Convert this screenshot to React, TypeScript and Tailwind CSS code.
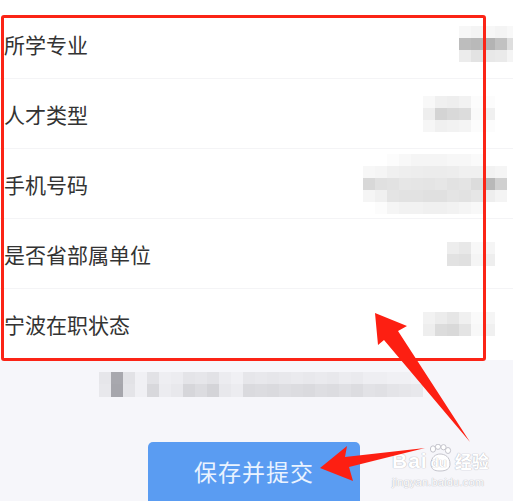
import React from "react";

type Cells = string[][];

const rows: { label: string; mr: string; cells: Cells }[] = [
  {
    label: "所学专业",
    mr: "mr-[-6px]",
    cells: [
      ["#f7f7f7", "#f4f4f4", "#f7f7f7", "#f4f4f4", "#f8f8f8"],
      ["#bdbdbd", "#b9b9b9", "#b3b3b3", "#c1c1c1", "#dedede"],
      ["#ececec", "#e3e3e3", "#e8e8e8", "#eaeaea", "#f4f4f4"],
    ],
  },
  {
    label: "人才类型",
    mr: "mr-[18px]",
    cells: [
      ["#f8f8f8", "#f0f0f0", "#eeeeee", "#f2f2f2", "#fcfcfc", "#fcfcfc"],
      ["#eeeeee", "#d4d4d4", "#d9d9d9", "#dcdcdc", "#fafafa", "#f0f0f0"],
      ["#f6f6f6", "#f0f0f0", "#f2f2f2", "#f4f4f4", "#fcfcfc", "#fcfcfc"],
    ],
  },
  {
    label: "手机号码",
    mr: "mr-[6px]",
    cells: [
      ["#ffffff", "#ffffff", "#fcfcfc", "#f8f8f8", "#f5f5f5", "#f5f5f5", "#f5f5f5", "#f7f7f7", "#f7f7f7", "#fafafa", "#ffffff", "#ffffff"],
      ["#f7f7f7", "#f5f5f5", "#f0f0f0", "#eeeeee", "#ededed", "#ececec", "#ececec", "#ededed", "#f0f0f0", "#f0f0f0", "#f2f2f2", "#f5f5f5"],
      ["#d8d8d8", "#e0e0e0", "#e2e2e2", "#e6e6e6", "#e5e5e5", "#e4e4e4", "#e6e6e6", "#e2e2e2", "#e4e4e4", "#dcdcdc", "#b8b8b8", "#d0d0d0"],
      ["#f5f5f5", "#f0f0f0", "#e4e4e4", "#e2e2e2", "#e2e2e2", "#e0e0e0", "#e0e0e0", "#e4e4e4", "#e2e2e2", "#e6e6e6", "#eeeeee", "#f4f4f4"],
      ["#ffffff", "#fcfcfc", "#f5f5f5", "#f2f2f2", "#f2f2f2", "#f0f0f0", "#f0f0f0", "#f2f2f2", "#f5f5f5", "#f8f8f8", "#ffffff", "#ffffff"],
    ],
  },
  {
    label: "是否省部属单位",
    mr: "mr-[18px]",
    cells: [
      ["#ededed", "#e8e8e8", "#f8f8f8", "#f5f5f5"],
      ["#e2e2e2", "#e0e0e0", "#f5f5f5", "#eeeeee"],
    ],
  },
  {
    label: "宁波在职状态",
    mr: "mr-[18px]",
    cells: [
      ["#f2f2f2", "#ececec", "#e6e6e6", "#f0f0f0", "#fafafa", "#f5f5f5"],
      ["#eeeeee", "#dcdcdc", "#d9d9d9", "#e4e4e4", "#f8f8f8", "#f0f0f0"],
    ],
  },
];

// blurred hint line under the form
const hintTop = "e6e6ea a8a8ae e2e2e6 f0f0f4 e2e2e6 eeeef2 ececf0 e4e4e8 e6e6ea e2e2e6 ececf0 f0f0f4 e6e6ea e8e8ec e6e6ea e8e8ec eaeaee e8e8ec eaeaee e8e8ec ececf0 eaeaee eeeef2 eeeef2 f0f0f4 f0f0f4 f2f2f6".split(" ");
const hintBottom = "e8e8ec a6a6ac e4e4e8 f0f0f4 d8d8dc ececf0 e8e8ec d6d6da dcdce0 d4d4d8 e8e8ec ececf0 dadade dcdce0 dadade dedee2 dcdce0 dadade dedee2 dcdce0 e0e0e4 dcdce0 e2e2e6 e0e0e4 e4e4e8 e6e6ea e8e8ec".split(" ");

function Mosaic({ cells }: { cells: Cells }) {
  return (
    <div className="flex flex-col">
      {cells.map((r, i) => (
        <div key={i} className="flex">
          {r.map((c, j) => (
            <div key={j} className="h-[12px] w-[12px]" style={{ background: c }} />
          ))}
        </div>
      ))}
    </div>
  );
}

function Watermark() {
  return (
    <div className="absolute left-[392px] top-[444px] flex flex-col font-['Liberation_Sans',sans-serif] text-white [text-shadow:0_0_1px_#b8b8c0,0_0_1px_#b8b8c0]">
      <div className="flex items-end">
        <span className="text-[21px] font-bold leading-[22px] tracking-[1px]">Bai</span>
        <div className="relative h-[28px] w-[24px]">
          <svg width="24" height="28" viewBox="0 0 24 28" className="absolute left-0 top-0">
            <g fill="#ffffff" stroke="#c4c4cc" strokeWidth="1">
              <ellipse cx="5" cy="5" rx="2.6" ry="3.2" />
              <ellipse cx="10" cy="2.8" rx="2.6" ry="2.6" />
              <ellipse cx="15.5" cy="3.2" rx="2.6" ry="2.6" />
              <ellipse cx="20" cy="6.5" rx="2.6" ry="3" />
              <path d="M3 20 C3 13 8 10 12 10 C17 10 22 13 22 20 C22 25 18 27 12 27 C6 27 3 25 3 20 Z" />
            </g>
          </svg>
          <span className="absolute left-[3px] top-[12px] text-[13px] font-bold leading-[14px]">du</span>
        </div>
        <span className="ml-[3px] font-['Noto_Sans_CJK_SC',sans-serif] text-[17px] font-bold leading-[22px]">经验</span>
      </div>
      <span className="mt-[4px] text-[11px] leading-[12px] tracking-[0.2px]">jingyan.baidu.com</span>
    </div>
  );
}

export default function App() {
  return (
    <div className="relative h-[501px] w-[513px] overflow-hidden bg-[#f6f6fa] font-['Noto_Sans_CJK_SC',sans-serif]">
      {/* form list */}
      <div className="bg-white">
        <div className="h-[9px]" />
        {rows.map((row, i) => (
          <div
            key={row.label}
            className={`flex h-[70px] items-center pl-[4px] ${i < rows.length - 1 ? "border-b border-[#f4f4f6]" : ""}`}
          >
            <span className="text-[21px] leading-[28px] text-[#333333]">{row.label}</span>
            <div className={`ml-auto ${row.mr}`}>
              <Mosaic cells={row.cells} />
            </div>
          </div>
        ))}
        <div className="h-[1px]" />
      </div>

      {/* hint line */}
      <div className="ml-[99px] mt-[12px] flex flex-col">
        <div className="flex">
          {hintTop.map((c, i) => (
            <div key={i} className="h-[12px] w-[12px]" style={{ background: `#${c}` }} />
          ))}
        </div>
        <div className="flex">
          {hintBottom.map((c, i) => (
            <div key={i} className="h-[13px] w-[12px]" style={{ background: `#${c}` }} />
          ))}
        </div>
      </div>

      {/* submit */}
      <div className="ml-[148px] mt-[45px] flex h-[70px] w-[212px] justify-center rounded-[5px] bg-[#5a9cf2] pt-[12px]">
        <span className="text-[23px] leading-[34px] tracking-[1px] text-[#eaf3ff]">保存并提交</span>
      </div>

      {/* annotation: red frame */}
      <div className="absolute left-[1px] top-[15px] h-[346px] w-[485px] rounded-[3px] border-[3px] border-[#fb2416]" />

      <Watermark />

      {/* annotation: arrows */}
      <svg className="absolute left-0 top-0" width="513" height="501" viewBox="0 0 513 501">
        <polygon fill="#fd1f12" points="375,313 407,326 398,331 470,442 384,340 378,345" />
        <polygon fill="#fd1f12" points="320,468 347,446 345,457 425,448 349,467 353,481" />
      </svg>
    </div>
  );
}
